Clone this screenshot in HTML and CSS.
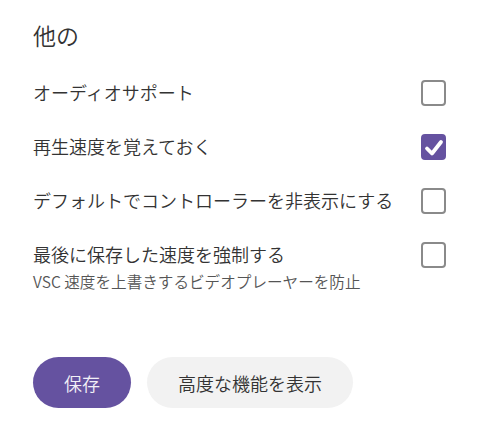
FILE: index.html
```html
<!DOCTYPE html>
<html lang="ja">
<head>
<meta charset="utf-8">
<link rel="stylesheet" href="styles.css">
</head>
<body>
<div class="page">
  <h2 class="title">他の</h2>
  <div class="row">
    <div class="label">オーディオサポート</div>
    <span class="box"></span>
  </div>
  <div class="row">
    <div class="label">再生速度を覚えておく</div>
    <span class="box checked"><svg viewBox="0 0 26 26" width="26" height="26"><polyline points="6,14.5 11,19.5 20,8" fill="none" stroke="#fff" stroke-width="3.8" stroke-linecap="round" stroke-linejoin="round"/></svg></span>
  </div>
  <div class="row">
    <div class="label">デフォルトでコントローラーを非表示にする</div>
    <span class="box"></span>
  </div>
  <div class="row">
    <div class="label">最後に保存した速度を強制する<div class="desc">VSC 速度を上書きするビデオプレーヤーを防止</div></div>
    <span class="box"></span>
  </div>
  <div class="actions">
    <button class="btn primary">保存</button>
    <button class="btn secondary">高度な機能を表示</button>
  </div>
</div>
</body>
</html>
```
FILE: styles.css
```css
html, body {
  margin: 0;
  padding: 0;
  background: #fff;
}
body {
  font-family: "Noto Sans CJK JP", "Noto Sans", sans-serif;
  font-weight: 350;
  color: #333;
}
.page {
  padding: 20px 54px 0 33px;
}
.title {
  margin: 0 0 30px;
  font-size: 23px;
  font-weight: 350;
  line-height: 30px;
}
.row {
  display: flex;
  justify-content: space-between;
  align-items: flex-start;
  margin-bottom: 28px;
}
.label {
  font-size: 18px;
  line-height: 24px;
}
.desc {
  font-size: 15.6px;
  line-height: 22px;
  margin-top: 4px;
  color: #555;
}
.box {
  box-sizing: border-box;
  width: 25px;
  height: 26px;
  border: 2px solid #8a8a8a;
  border-radius: 4px;
  flex: none;
  display: flex;
  align-items: center;
  justify-content: center;
}
.box.checked {
  background: #6552a0;
  border-color: #6552a0;
}
.box.checked svg {
  display: block;
  flex: none;
}
.actions {
  display: flex;
  gap: 16px;
  margin-top: 65px;
}
.btn {
  font-family: inherit;
  font-weight: 350;
  font-size: 18px;
  height: 51px;
  padding: 0 31px;
  border: none;
  border-radius: 26px;
  cursor: pointer;
}
.btn.primary {
  background: #6552a0;
  color: #f2f0f7;
}
.btn.secondary {
  background: #f2f2f2;
  color: #333;
}
```
